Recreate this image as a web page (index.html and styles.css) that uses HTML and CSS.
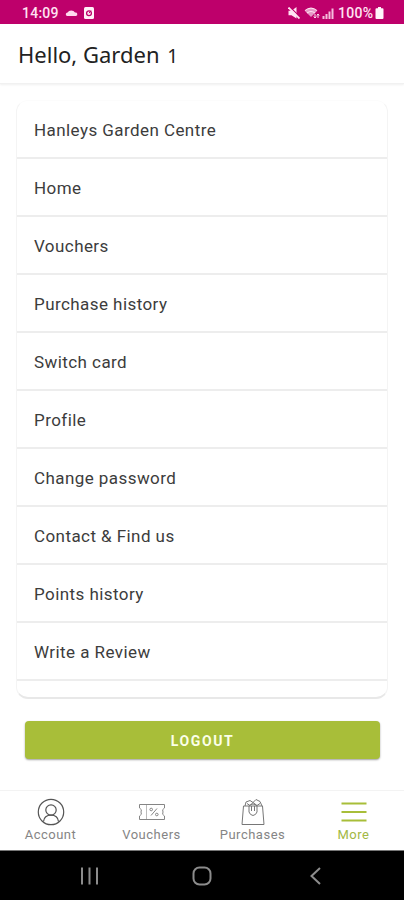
FILE: index.html
```html
<!DOCTYPE html>
<html lang="en">
<head>
<meta charset="utf-8">
<meta name="viewport" content="width=device-width, initial-scale=1">
<title>More</title>
<link rel="stylesheet" href="styles.css">
</head>
<body>
<div class="status">
  <span class="clock">14:09</span>
  <svg class="cloud" width="13" height="8" viewBox="0 0 13 8"><path d="M2 7a1.800 1.800 0 0 1 .5-3.500A4.200 3.500 0 0 1 10 3.500 1.800 1.800 0 0 1 11 7z" fill="#ffd9ee"/></svg>
  <svg class="app" width="10" height="12" viewBox="0 0 10 12"><rect width="10" height="12" rx="1.5" fill="#fff0f8"/><circle cx="5" cy="6.2" r="2.4" fill="none" stroke="#be006b" stroke-width="1.3"/><path d="M5 6.2l2-2.6" stroke="#be006b"/></svg>
  <span class="spacer"></span>
  <svg class="mute" width="12" height="12" viewBox="0 0 12 12"><path d="M.5 3.800h3L8.500 0v11.500L3.500 8.200h-3z" fill="#ffe3f2"/><path d="M2 0l10 10" stroke="#be006b" stroke-width="1.200"/><path d="M.5 .5l11 11" stroke="#ffe3f2" stroke-width="1.800"/></svg>
  <svg class="wifi" width="16" height="12" viewBox="0 0 16 12"><path d="M1 4Q7 -1.500 13 4L7 10z" fill="#e59ac6"/><path d="M1 3.600Q7 -1.500 13 3.600M3 6q4-3 8 0" fill="none" stroke="#ffe3f2" stroke-width="1.200"/><path d="M11 7v4M9.700 9.500L11 11l1.300-1.500M14 11V7M12.800 8.500L14 7l1.200 1.500" fill="none" stroke="#ffe3f2"/></svg>
  <svg class="signal" width="12" height="11" viewBox="0 0 12 11"><path d="M1.500 11V8M4.500 11V6M7.500 11V3.500M10.500 11V.5" stroke="#f5bddd" stroke-width="2"/></svg>
  <span class="percent">100%</span>
  <svg class="battery" width="9" height="12" viewBox="0 0 8 12"><path d="M2.500 0h3v1.300H7q1 0 1 1V11q0 1-1 1H1q-1 0-1-1V2.300q0-1 1-1h1.500z" fill="#fff4fa"/></svg>
</div>
<header class="header"><h1>Hello, Garden <span class="numeral">1</span></h1></header>
<main class="content">
  <ul class="menu">
    <li>Hanleys Garden Centre</li>
    <li>Home</li>
    <li>Vouchers</li>
    <li>Purchase history</li>
    <li>Switch card</li>
    <li>Profile</li>
    <li>Change password</li>
    <li>Contact &amp; Find us</li>
    <li>Points history</li>
    <li>Write a Review</li>
  </ul>
  <button class="logout">LOGOUT</button>
</main>
<nav class="tabs">
  <a class="tab"><svg width="28" height="28" viewBox="0 0 28 28"><g fill="none" stroke="#555" stroke-width="1.200"><circle cx="14" cy="14" r="12.700"/><circle cx="14" cy="12" r="5.200"/><path d="M6.500 23.500C7 19.500 9.500 17.200 14 17.200s7 2.300 7.500 6.300"/></g></svg><span>Account</span></a>
  <a class="tab"><svg width="28" height="28" viewBox="0 0 28 28"><g fill="none" stroke="#858585"><path d="M1.500 6.500h25V10q-3 1.500-1.500 4-1.500 2.500 1.500 4v3.500h-25V18q3-1.500 1.500-4 1.500-2.500-1.500-4z"/><path d="M8.500 7v14" stroke="#bbb"/><path d="M12.500 10.500l7 7M13 17.500l6-7" stroke="none"/><path d="M13 17.500l6-7"/><circle cx="13.200" cy="11.500" r="1.300"/><circle cx="18.800" cy="16.500" r="1.300"/></g></svg><span>Vouchers</span></a>
  <a class="tab"><svg width="28" height="28" viewBox="0 0 28 28"><g fill="none" stroke="#777"><path d="M4.500 8h19l1.500 18.500H3z"/><path d="M6 8l1-4 4-1.500 3 2 3-3 4 2L23 8M8 5.500l3 2 3-3 4 3 3-2"/><path d="M10 8q4-4 8 0v6q-1 3-4 3.500-3-.5-4-3.500zM12.500 8v5M15.500 8v5"/></g></svg><span>Purchases</span></a>
  <a class="tab active"><svg width="28" height="28" viewBox="0 0 28 28"><path d="M1.500 5.500h25M1.500 14h25M1.500 22.500h25" stroke="#a8be39" stroke-width="2"/></svg><span>More</span></a>
</nav>
<div class="system">
  <svg width="114" height="20" viewBox="0 0 114 20"><path d="M50 1.500v17M57.500 1.500v17M65 1.500v17" stroke="#8c8c8c" stroke-width="2"/></svg>
  <svg width="114" height="20" viewBox="0 0 114 20"><rect x="47.500" y="1.500" width="17" height="17" rx="6" fill="none" stroke="#8c8c8c" stroke-width="2"/></svg>
  <svg width="114" height="20" viewBox="0 0 114 20"><path d="M60 2L51.500 10l8.500 8" fill="none" stroke="#8c8c8c" stroke-width="2"/></svg>
</div>
</body>
</html>
```

FILE: styles.css
```css
* { box-sizing: border-box; }
body {
  margin: 0;
  height: 900px;
  display: flex;
  flex-direction: column;
  overflow: hidden;
  background: #fff;
  font-family: Roboto, sans-serif;
}
svg { display: block; flex: none; }
.status {
  height: 24px;
  padding: 2px 20px 0 22px;
  display: flex;
  align-items: center;
  background: #be006b;
  color: #ffe3f2;
  font-size: 14px;
  font-weight: 500;
}
.clock { width: 37px; letter-spacing: .25px; }
.cloud { margin: 0 6px; }
.spacer { flex: 1; }
.wifi { margin-left: 4px; }
.signal { margin: 0 4px 0 2px; }
.percent { width: 36px; letter-spacing: .3px; }
.battery { margin-left: 1px; }
.header {
  height: 60px;
  padding: 2px 0 0 18px;
  display: flex;
  align-items: center;
  border-bottom: 1px solid #f1f1f1;
  box-shadow: 0 1px 2px #00000010;
}
h1 {
  margin: 0;
  font: 400 22px/30px "Noto Sans", sans-serif;
  color: #222;
  white-space: nowrap;
}
.numeral { margin-left: 2px; font-size: 19px; }
.content { height: 706px; padding: 16px 16px 0; }
.menu {
  height: 599px;
  margin: 0 0 22px;
  padding: 0;
  list-style: none;
  border: 1px solid #f4f4f4;
  border-top-color: #fcfcfc;
  border-bottom: 2px solid #e8e8e8;
  border-radius: 12px;
}
.menu li {
  height: 58px;
  padding: 2px 17px 0;
  display: flex;
  align-items: center;
  border-bottom: 2px solid #ededed;
  color: #3c3c3c;
  font-size: 17px;
  letter-spacing: .43px;
}
.logout {
  display: block;
  width: 355px;
  height: 38px;
  margin: 0 9px;
  padding: 1px 0 0;
  border: 0;
  border-radius: 4px;
  background: #a8be39;
  box-shadow: 0 1px 2px #00000060;
  color: #fbffe8;
  font: 700 14px Roboto, sans-serif;
  letter-spacing: 1.6px;
}
.tabs {
  height: 60px;
  display: grid;
  grid-template-columns: repeat(4, 101px);
  border-top: 1px solid #f3f3f3;
}
.tab {
  display: flex;
  flex-direction: column;
  align-items: center;
  padding-top: 7px;
  color: #858585;
  font-size: 13px;
  line-height: 17px;
  letter-spacing: .5px;
}
.tab.active { color: #a3b844; }
.system {
  flex: 1;
  display: flex;
  align-items: center;
  padding-left: 32px;
  border-top: 1px solid #777;
  background: #000;
}
```
